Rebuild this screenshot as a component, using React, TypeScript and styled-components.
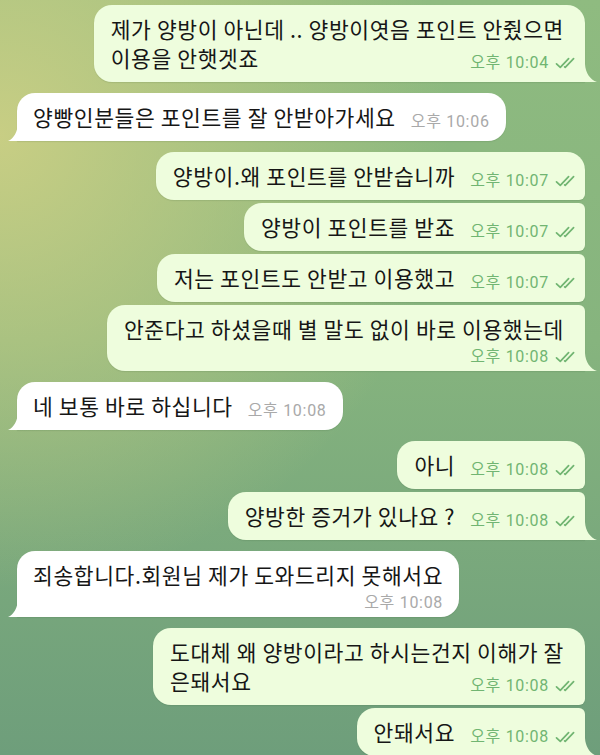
import React from "react";
import styled, { createGlobalStyle } from "styled-components";

const GlobalStyle = createGlobalStyle`
  html, body {
    margin: 0;
    padding: 0;
    background: #7fae7c;
  }
  * {
    box-sizing: border-box;
  }
`;

const Screen = styled.div`
  width: 600px;
  height: 755px;
  overflow: hidden;
  padding-top: 5px;
  font-family: "Noto Sans CJK KR", "Noto Sans", sans-serif;
  background:
    radial-gradient(ellipse 75% 60% at 0% 18%, rgba(203, 207, 132, 0.95) 0%, rgba(203, 207, 132, 0) 100%),
    linear-gradient(180deg, #8fbb80 0%, #86b47e 45%, #6e9e7b 100%);
`;

const List = styled.div`
  display: flex;
  flex-direction: column;
`;

const Row = styled.div<{ $out: boolean; $first: boolean }>`
  display: flex;
  justify-content: ${(p) => (p.$out ? "flex-end" : "flex-start")};
  padding: 0 15px 0 17px;
  margin-top: ${(p) => (p.$first ? "11px" : "3px")};
  &:first-child {
    margin-top: 0;
  }
`;

const Bubble = styled.div<{ $out: boolean; $first: boolean; $last: boolean }>`
  position: relative;
  display: flex;
  flex-direction: column;
  padding: ${(p) => (p.$out ? "9px 8px 10px 17px" : "9px 16px 10px 16px")};
  background: ${(p) => (p.$out ? "#eefddd" : "#ffffff")};
  color: #161616;
  box-shadow: 0 1px 1px rgba(40, 70, 40, 0.12);
  border-radius: ${(p) =>
    p.$out
      ? `18px ${p.$first ? "18px" : "6px"} ${p.$last ? "0" : "6px"} 18px`
      : `18px 18px 18px ${p.$last ? "0" : "18px"}`};
`;

const Line = styled.div<{ $out: boolean }>`
  font-size: 21.5px;
  letter-spacing: 0.6px;
  line-height: 29px;
  white-space: nowrap;
  margin-right: ${(p) => (p.$out ? "13px" : "0")};
`;

const LastRow = styled.div`
  display: flex;
  align-items: flex-end;
  justify-content: space-between;
  column-gap: 15px;
`;

const LastText = styled.span`
  font-size: 21.5px;
  letter-spacing: 0.6px;
  line-height: 29px;
  white-space: nowrap;
`;

const Meta = styled.div<{ $out: boolean; $below?: boolean }>`
  display: flex;
  align-items: center;
  gap: 6px;
  align-self: flex-end;
  margin-top: ${(p) => (p.$below ? "6px" : "0")};
  margin-bottom: ${(p) => (p.$below ? "-4px" : "1px")};
  font-family: Roboto, "Noto Sans CJK KR", sans-serif;
  font-size: 16px;
  letter-spacing: 0.7px;
  line-height: 16px;
  white-space: nowrap;
  color: ${(p) => (p.$out ? "#71b572" : "#a9a9a9")};
`;

const Tail = styled.svg<{ $out: boolean }>`
  position: absolute;
  bottom: 0;
  ${(p) => (p.$out ? "right: -12px;" : "left: -9px;")}
`;

type Msg = {
  out: boolean;
  lines: string[];
  time: string;
  timeBelow?: boolean;
};

const messages: Msg[] = [
  { out: true, lines: ["제가 양방이 아닌데 .. 양방이엿음 포인트 안줬으면", "이용을 안햇겟죠"], time: "오후 10:04" },
  { out: false, lines: ["양빵인분들은 포인트를 잘 안받아가세요"], time: "오후 10:06" },
  { out: true, lines: ["양방이.왜 포인트를 안받습니까"], time: "오후 10:07" },
  { out: true, lines: ["양방이 포인트를 받죠"], time: "오후 10:07" },
  { out: true, lines: ["저는 포인트도 안받고 이용했고"], time: "오후 10:07" },
  { out: true, lines: ["안준다고 하셨을때 별 말도 없이 바로 이용했는데"], time: "오후 10:08", timeBelow: true },
  { out: false, lines: ["네 보통 바로 하십니다"], time: "오후 10:08" },
  { out: true, lines: ["아니"], time: "오후 10:08" },
  { out: true, lines: ["양방한 증거가 있나요 ?"], time: "오후 10:08" },
  { out: false, lines: ["죄송합니다.회원님 제가 도와드리지 못해서요"], time: "오후 10:08", timeBelow: true },
  { out: true, lines: ["도대체 왜 양방이라고 하시는건지 이해가 잘", "은돼서요"], time: "오후 10:08" },
  { out: true, lines: ["안돼서요"], time: "오후 10:08" },
];

const DoubleCheck = () => (
  <svg width="22" height="12" viewBox="0 0 22 12" fill="none">
    <path d="M1.5 6.8 L5.3 10.4 L13.6 1.6" stroke="currentColor" strokeWidth="1.7" strokeLinecap="round" strokeLinejoin="round" />
    <path d="M9.6 9.9 L10.2 10.4 L18.6 1.6" stroke="currentColor" strokeWidth="1.7" strokeLinecap="round" strokeLinejoin="round" />
  </svg>
);

const MetaInfo = ({ m, below }: { m: Msg; below?: boolean }) => (
  <Meta $out={m.out} $below={below}>
    <span>{m.time}</span>
    {m.out && <DoubleCheck />}
  </Meta>
);

const Message = ({ m, first, last }: { m: Msg; first: boolean; last: boolean }) => {
  const head = m.timeBelow ? m.lines : m.lines.slice(0, -1);
  const tail = m.timeBelow ? null : m.lines[m.lines.length - 1];

  return (
    <Row $out={m.out} $first={first}>
      <Bubble $out={m.out} $first={first} $last={last}>
        {head.map((line) => (
          <Line key={line} $out={m.out}>
            {line}
          </Line>
        ))}
        {tail !== null ? (
          <LastRow>
            <LastText>{tail}</LastText>
            <MetaInfo m={m} />
          </LastRow>
        ) : (
          <MetaInfo m={m} below />
        )}
        {last &&
          (m.out ? (
            <Tail $out width="12" height="18" viewBox="0 0 12 18">
              <path d="M0 0 C0.5 9 5 15.5 12 18 L0 18 Z" fill="#eefddd" />
            </Tail>
          ) : (
            <Tail $out={false} width="10" height="18" viewBox="0 0 10 18">
              <path d="M10 0 C9.6 9 5.8 15.5 0 18 L10 18 Z" fill="#ffffff" />
            </Tail>
          ))}
      </Bubble>
    </Row>
  );
};

const App = () => {
  return (
    <Screen>
      <GlobalStyle />
      <List>
        {messages.map((m, i) => {
          const prev = messages[i - 1];
          const next = messages[i + 1];
          const first = !prev || prev.out !== m.out;
          const last = !next || next.out !== m.out;
          return <Message key={i} m={m} first={first} last={last} />;
        })}
      </List>
    </Screen>
  );
};

export default App;
